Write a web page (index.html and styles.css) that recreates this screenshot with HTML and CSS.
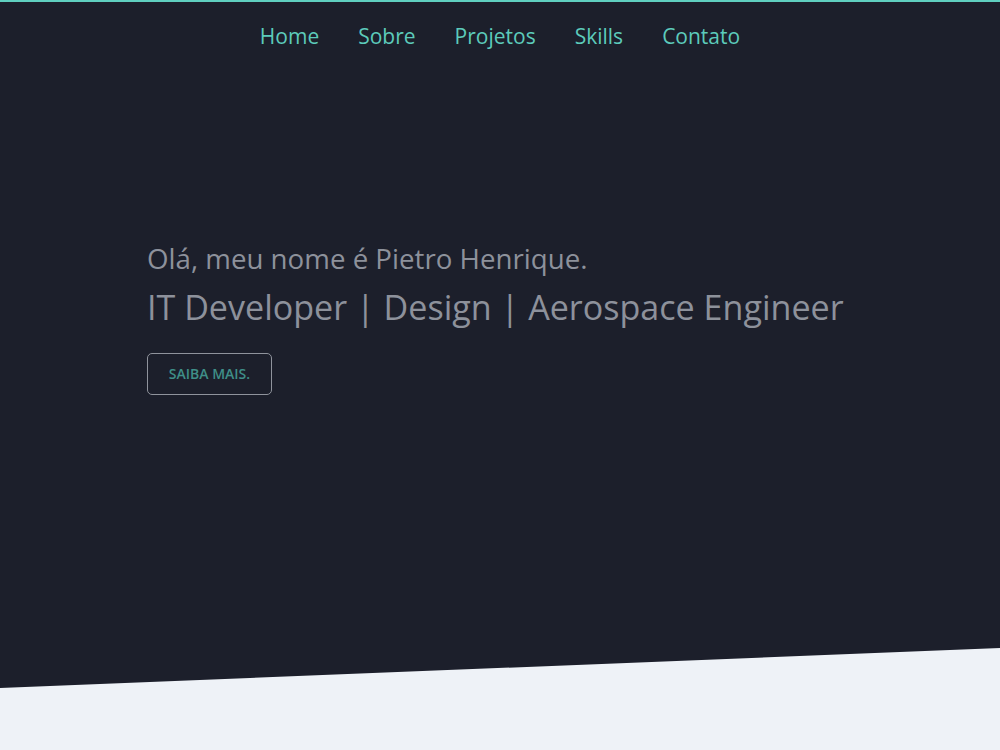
FILE: index.html
```html
<!DOCTYPE html>
<html lang="pt-BR">
<head>
<meta charset="utf-8">
<title>Pietro Henrique</title>
<link rel="stylesheet" href="styles.css">
</head>
<body>
<header class="hero">
  <nav class="nav">
    <a href="#home">Home</a>
    <a href="#sobre">Sobre</a>
    <a href="#projetos">Projetos</a>
    <a href="#skills">Skills</a>
    <a href="#contato">Contato</a>
  </nav>
  <div class="intro">
    <h1 class="hello">Olá, meu nome é Pietro Henrique.</h1>
    <h2 class="role">IT Developer | Design | Aerospace Engineer</h2>
    <a class="btn" href="#sobre">SAIBA MAIS.</a>
  </div>
</header>
</body>
</html>
```
FILE: styles.css
```css
html, body {
  margin: 0;
  padding: 0;
}
body {
  background: #eef2f7;
  font-family: "Open Sans", "Noto Sans", sans-serif;
  height: 750px;
  overflow: hidden;
}
.hero {
  box-sizing: border-box;
  height: 690px;
  background: #1c1f2b;
  border-top: 2px solid #5fcfc0;
  clip-path: polygon(0 0, 100% 0, 100% 648px, 0 688px);
}
.nav {
  display: flex;
  justify-content: center;
  gap: 39px;
  padding-top: 19px;
}
.nav a {
  color: #5ccbbb;
  text-decoration: none;
  font-size: 21px;
  line-height: 30px;
}
.intro {
  padding: 189px 0 0 147px;
}
.hello {
  margin: 0;
  font-weight: 400;
  font-size: 27.7px;
  line-height: 36px;
  color: #8d919b;
}
.role {
  margin: 8px 0 0;
  font-weight: 400;
  font-size: 34.1px;
  line-height: 46px;
  color: #8d919b;
}
.btn {
  display: inline-block;
  margin-top: 23px;
  box-sizing: border-box;
  width: 125px;
  height: 42px;
  line-height: 40px;
  text-align: center;
  border: 1.5px solid #8f939c;
  border-radius: 5px;
  color: #3f8f88;
  font-size: 14px;
  font-weight: 600;
  text-decoration: none;
}
```
